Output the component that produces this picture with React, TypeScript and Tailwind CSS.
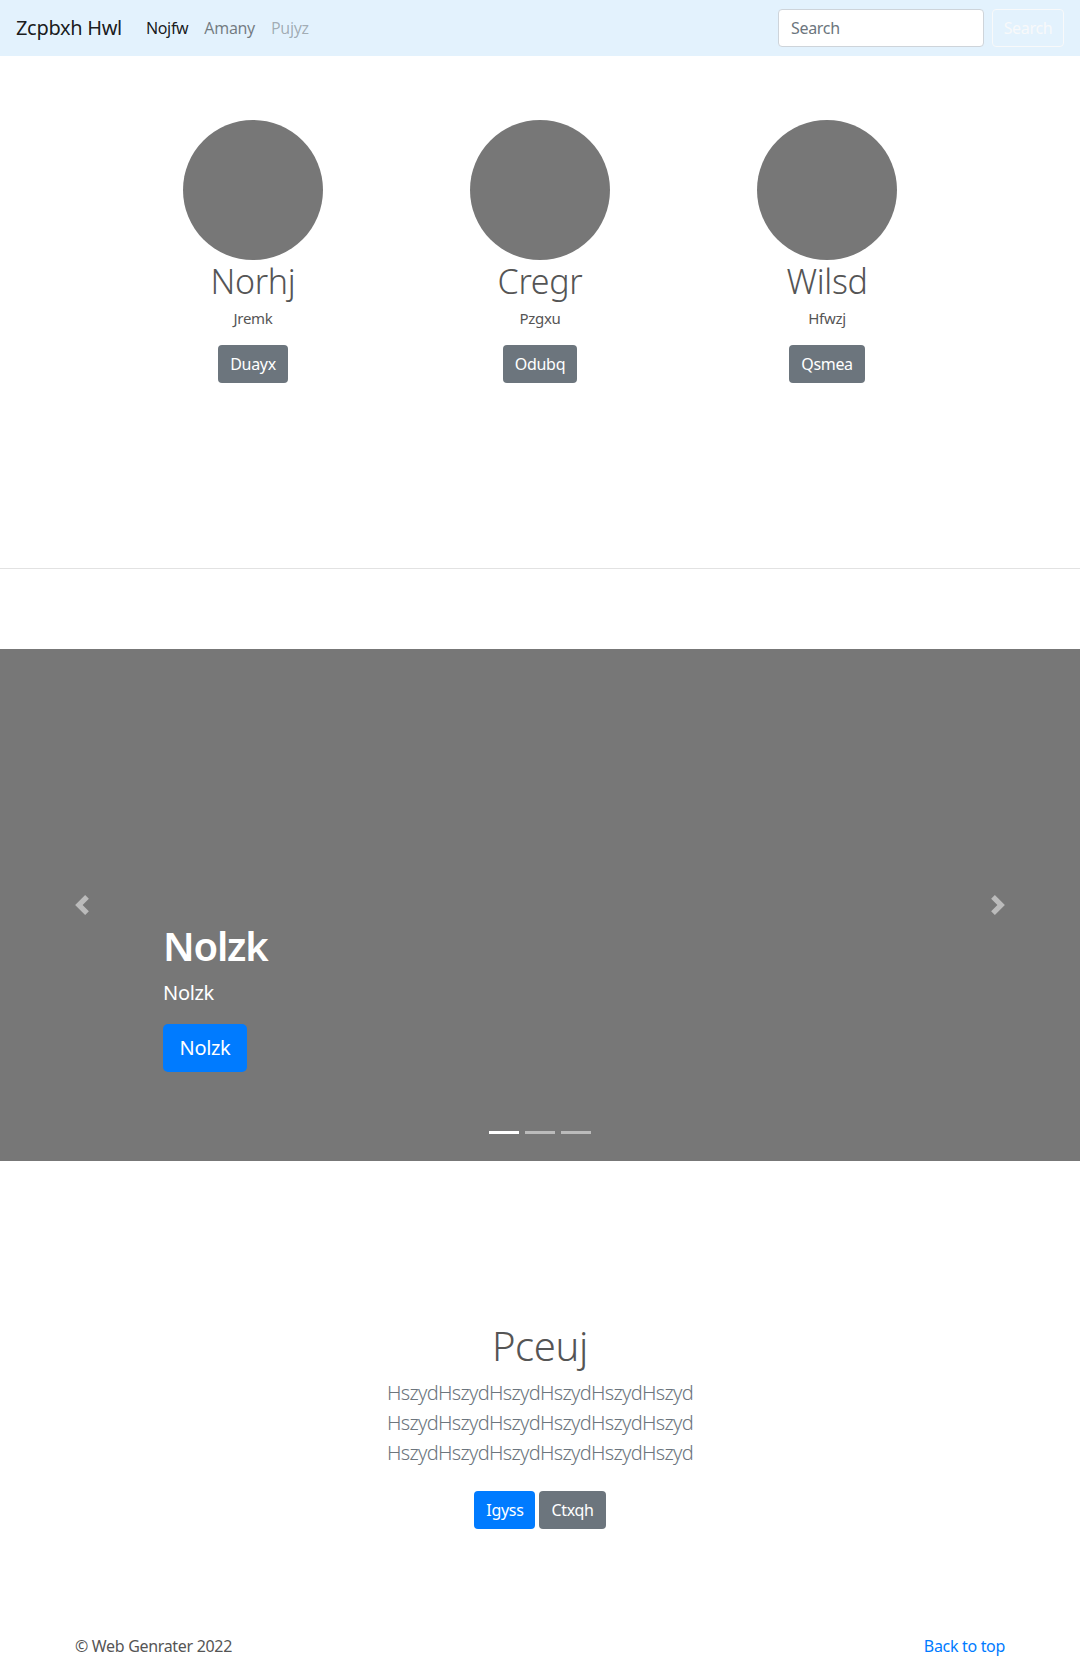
import React from "react";

const people = [
  { name: "Norhj", sub: "Jremk", btn: "Duayx" },
  { name: "Cregr", sub: "Pzgxu", btn: "Odubq" },
  { name: "Wilsd", sub: "Hfwzj", btn: "Qsmea" },
];

const line = "HszydHszydHszydHszydHszydHszyd";

export default function App() {
  return (
    <div className="w-[1080px] min-h-[1657px] bg-white text-[#212529] tracking-[-0.02em]" style={{ fontFamily: '"Noto Sans", "Open Sans", sans-serif' }}>
      {/* Navbar */}
      <nav className="h-[56px] bg-[#e3f2fd] flex items-center px-4">
        <span className="text-[20px] text-black/90 mr-[16px] leading-[30px]">Zcpbxh Hwl</span>
        <div className="flex items-center text-[16px]">
          <span className="px-2 text-black/90">Nojfw</span>
          <span className="px-2 text-black/50">Amany</span>
          <span className="px-2 text-black/30">Pujyz</span>
        </div>
        <div className="ml-auto flex items-center">
          <div className="w-[206px] h-[38px] bg-white border border-[#ced4da] rounded-[4px] flex items-center px-3 text-[16px] text-[#6c757d]">Search</div>
          <div className="ml-2 w-[72px] h-[38px] border border-[#f8f9fa] rounded-[4px] flex items-center justify-center text-[16px] text-[#f8f9fa]">Search</div>
        </div>
      </nav>

      {/* Marketing */}
      <section className="pt-[64px] h-[512px]">
        <div className="w-[861px] mx-auto grid grid-cols-3">
          {people.map((p) => (
            <div key={p.name} className="flex flex-col items-center">
              <div className="w-[140px] h-[140px] rounded-full bg-[#777777]" />
              <div className="mt-[1px] text-[34px] font-light leading-[40px] text-[#555]">{p.name}</div>
              <div className="mt-[5px] text-[15px] leading-[24px] text-[#555]">{p.sub}</div>
              <div className="mt-[15px] h-[38px] px-3 rounded-[4px] bg-[#6c757d] text-white text-[16px] flex items-center">{p.btn}</div>
            </div>
          ))}
        </div>
      </section>
      <hr className="border-0 border-t border-[#e2e2e2]" />

      {/* Carousel */}
      <section className="mt-[80px] relative h-[512px] bg-[#777777]">
        <div className="absolute left-[72px] top-[246px] w-[20px] h-[20px] flex items-center justify-center">
          <svg viewBox="0 0 8 8" width="20" height="20" fill="#ffffff" fillOpacity="0.5">
            <path d="M5.25 0l-4 4 4 4 1.5-1.5-2.5-2.5 2.5-2.5-1.5-1.5z" />
          </svg>
        </div>
        <div className="absolute left-[988px] top-[246px] w-[20px] h-[20px] flex items-center justify-center">
          <svg viewBox="0 0 8 8" width="20" height="20" fill="#ffffff" fillOpacity="0.5">
            <path d="M2.75 0l-1.5 1.5 2.5 2.5-2.5 2.5 1.5 1.5 4-4-4-4z" />
          </svg>
        </div>
        <div className="absolute left-[163px] top-[273px] text-white">
          <div className="text-[40px] font-semibold leading-[48px] tracking-[-0.03em]">Nolzk</div>
          <div className="mt-[8px] text-[20px] leading-[30px]">Nolzk</div>
          <div className="mt-[16px] w-[84px] h-[48px] rounded-[5px] bg-[#007bff] text-[20px] flex items-center justify-center">Nolzk</div>
        </div>
        <div className="absolute left-0 right-0 top-[482px] flex justify-center gap-[6px]">
          <span className="w-[30px] h-[3px] bg-white" />
          <span className="w-[30px] h-[3px] bg-white/50" />
          <span className="w-[30px] h-[3px] bg-white/50" />
        </div>
      </section>

      {/* Jumbotron */}
      <section className="pt-[161px] flex flex-col items-center text-center">
        <h1 className="text-[40px] font-light leading-[48px] text-[#555]">Pceuj</h1>
        <div className="mt-[8px] text-[20px] font-light leading-[30px] text-[#6c757d] tracking-[-0.035em]">
          <div>{line}</div>
          <div>{line}</div>
          <div>{line}</div>
        </div>
        <div className="mt-[23px] flex gap-[4px]">
          <div className="h-[38px] px-3 rounded-[4px] bg-[#007bff] text-white text-[16px] flex items-center">Igyss</div>
          <div className="h-[38px] px-3 rounded-[4px] bg-[#6c757d] text-white text-[16px] flex items-center">Ctxqh</div>
        </div>
      </section>

      {/* Footer */}
      <footer className="mt-[105px] w-[960px] mx-auto px-[15px] flex justify-between text-[16px] leading-[24px]">
        <span className="text-[#555]">© Web Genrater 2022</span>
        <span className="text-[#007bff]">Back to top</span>
      </footer>
    </div>
  );
}
